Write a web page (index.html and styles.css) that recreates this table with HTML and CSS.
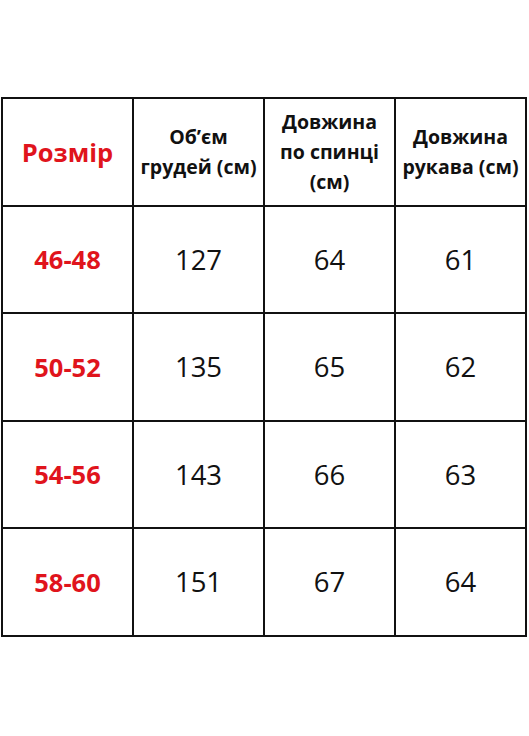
FILE: index.html
```html
<!DOCTYPE html>
<html lang="uk">
<head>
<meta charset="utf-8">
<title>Розмірна сітка</title>
<link rel="stylesheet" href="styles.css">
</head>
<body>
<div class="page">
  <table class="sizes">
    <tr class="head">
      <th class="size">Розмір</th>
      <th>Об’єм<br>грудей (см)</th>
      <th>Довжина<br>по спинці<br>(см)</th>
      <th>Довжина<br>рукава (см)</th>
    </tr>
    <tr><td class="size">46-48</td><td>127</td><td>64</td><td>61</td></tr>
    <tr><td class="size">50-52</td><td>135</td><td>65</td><td>62</td></tr>
    <tr><td class="size">54-56</td><td>143</td><td>66</td><td>63</td></tr>
    <tr><td class="size">58-60</td><td>151</td><td>67</td><td>64</td></tr>
  </table>
</div>
</body>
</html>
```

FILE: styles.css
```css
html, body {
  margin: 0;
  padding: 0;
  background: #fff;
}
.page {
  padding: 97px 0 0 1px;
  font-family: "Open Sans", "Noto Sans", sans-serif;
  color: #111;
}
.sizes {
  border-collapse: collapse;
  width: 526px;
  table-layout: fixed;
}
.sizes th,
.sizes td {
  border: 2px solid #111;
  height: 105.5px;
  padding: 0;
  text-align: center;
  vertical-align: middle;
}
.sizes th {
  font-weight: 700;
  font-size: 19.5px;
  line-height: 30px;
}
.sizes td {
  font-size: 27.5px;
  font-weight: 400;
}
.sizes .size {
  color: #e0141c;
  font-weight: 700;
  font-size: 25.5px;
}
```
